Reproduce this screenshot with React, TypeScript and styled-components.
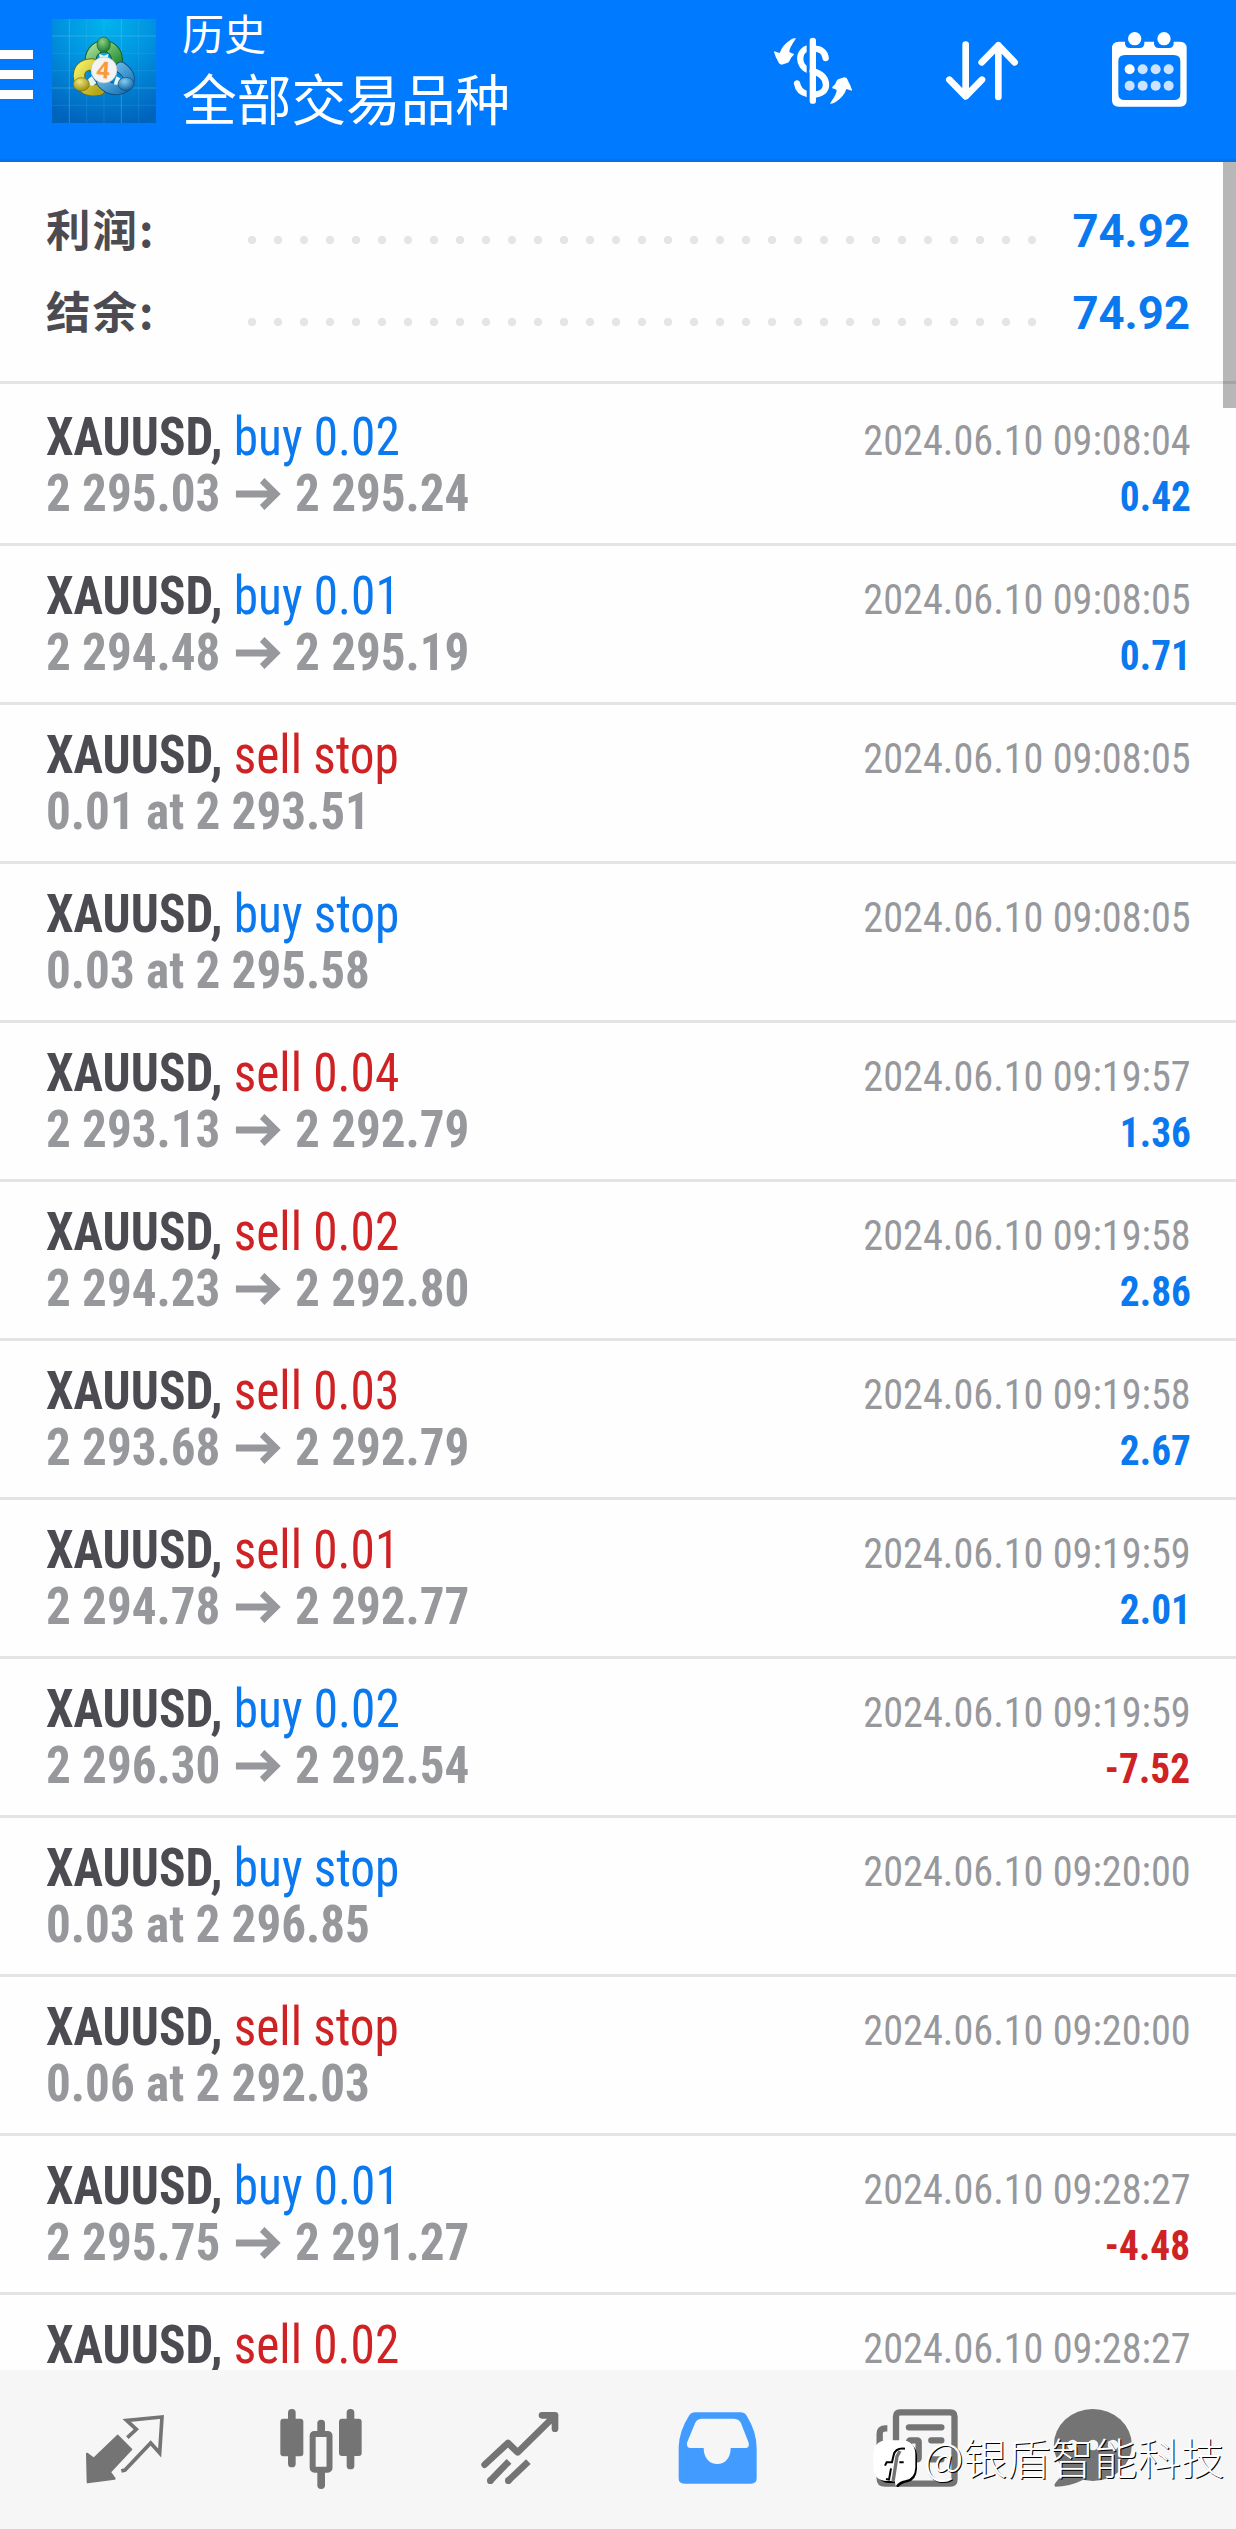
import React from 'react';
import styled, { createGlobalStyle } from 'styled-components';

const BLUE = '#0a78ee';
const RED = '#cf2224';
const NAV_GREY = '#747474';
const condensed = "'Roboto Condensed', Roboto, 'Noto Sans CJK SC', sans-serif";
const cjk = "'Noto Sans CJK SC', Roboto, sans-serif";

const GlobalStyle = createGlobalStyle`
  * { box-sizing: border-box; }
  body { margin: 0; background: #fefefe; }
`;

const Screen = styled.div`
  position: relative;
  width: 1236px;
  height: 2529px;
  display: flex;
  flex-direction: column;
  overflow: hidden;
  background: #fefefe;
  font-family: ${condensed};
`;

const Header = styled.header`
  flex: none;
  height: 162px;
  display: flex;
  align-items: flex-start;
  background: #007aff;
  border-bottom: 3px solid #0871e6;
  padding-right: 36px;
`;

const MenuButton = styled.div`
  width: 33px;
  margin: 50px 19px 0 0;
  display: flex;
  flex-direction: column;
  gap: 11px;
`;

const MenuBar = styled.span`
  height: 9px;
  background: #fff;
`;

const Brand = styled.svg`
  width: 104px;
  height: 104px;
  margin-top: 19px;
  flex: none;
`;

const Titles = styled.div`
  flex: 1;
  margin-left: 26px;
  padding-top: 3px;
  display: flex;
  flex-direction: column;
  font-family: ${cjk};
  color: #fff;
  white-space: nowrap;
`;

const Section = styled.span`
  font-size: 42px;
  line-height: 58px;
`;

const Scope = styled.span`
  font-size: 54.7px;
  line-height: 72px;
`;

const Actions = styled.div`
  display: flex;
  gap: 70px;
  margin-top: 20px;
`;

const ActionIcon = styled.svg<{ $width: number }>`
  width: ${(p) => p.$width}px;
  height: 100px;
`;

const Content = styled.main`
  flex: 1;
  min-height: 0;
  overflow: hidden;
  position: relative;
`;

const ScrollThumb = styled.div`
  position: absolute;
  top: 0;
  right: 0;
  width: 13px;
  height: 246px;
  background: rgba(0, 0, 0, 0.28);
`;

const Summary = styled.section`
  height: 222px;
  padding: 25px 46px 0 46px;
  border-bottom: 3px solid #e4e4e4;
`;

const SummaryRow = styled.div`
  height: 82px;
  display: flex;
  align-items: baseline;
  line-height: 82px;
`;

const SummaryLabel = styled.span`
  width: 193px;
  font-family: ${cjk};
  font-weight: 700;
  font-size: 44.5px;
  letter-spacing: 2px;
  color: #4c4b51;
`;

const Leader = styled.span`
  align-self: flex-start;
  width: 806px;
  height: 26px;
  margin-top: 40px;
  background: radial-gradient(circle, #e5e5e5 3.8px, rgba(229, 229, 229, 0) 4.5px) 0 0 / 26px 26px repeat-x;
`;

const SummaryValue = styled.span`
  flex: 1;
  text-align: right;
  font-family: Roboto, sans-serif;
  font-weight: 700;
  font-size: 45.5px;
  color: ${BLUE};
`;

const Deal = styled.article<{ $first: boolean }>`
  height: ${(p) => (p.$first ? 162 : 159)}px;
  padding: ${(p) => (p.$first ? 25 : 22)}px 45.5px 0 46px;
  display: flex;
  justify-content: space-between;
  border-bottom: 3px solid #e4e4e4;
  white-space: nowrap;
  line-height: 56px;
`;

const DealMain = styled.div`
  display: flex;
  flex-direction: column;
`;

const DealTitle = styled.div`
  font-size: 53px;
  transform: scaleX(0.93);
  transform-origin: left;
`;

const Instrument = styled.b`
  font-weight: 700;
  color: #4c4b51;
`;

const Order = styled.span<{ $buy: boolean }>`
  font-weight: 450;
  color: ${(p) => (p.$buy ? BLUE : RED)};
`;

const Prices = styled.div`
  display: flex;
  align-items: center;
  font-size: 52px;
  font-weight: 700;
  color: #97989c;
  transform: translateY(1px) scaleX(0.944);
  transform-origin: left;
`;

const Arrow = styled.svg`
  width: 48px;
  height: 32px;
  margin: 0 15px 0 16px;
`;

const DealSide = styled.div`
  padding-top: 4px;
  display: flex;
  flex-direction: column;
  align-items: flex-end;
  font-size: 42px;
`;

const Time = styled.time`
  color: #97989c;
  font-weight: 430;
  transform: scaleX(0.958);
  transform-origin: right;
`;

const Result = styled.b<{ $loss: boolean }>`
  color: ${(p) => (p.$loss ? RED : BLUE)};
  transform: scaleX(0.936);
  transform-origin: right;
`;

const Nav = styled.nav`
  flex: none;
  height: 159px;
  padding: 30px 0 0 26px;
  display: flex;
  background: #f6f6f7;
`;

const NavItem = styled.div<{ $last?: boolean }>`
  width: ${(p) => (p.$last ? 157 : 197.5)}px;
  display: flex;
  justify-content: center;
`;

const NavIcon = styled.svg`
  width: 100px;
  height: 100px;
`;

const Watermark = styled.div`
  position: absolute;
  left: 872px;
  top: 2423px;
  display: flex;
  align-items: center;
  height: 66px;
  white-space: nowrap;
  font-family: ${cjk};
  font-weight: 300;
  font-size: 43.5px;
  color: #fff;
  text-shadow: 1px 1px 0.5px #000;
`;

const WatermarkBadge = styled.svg`
  width: 50px;
  height: 56px;
  margin: 6px 2px 0 0;
`;

type DealData = { order: string; from: string; to?: string; time: string; result?: string };

const deals: DealData[] = [
  { order: 'buy 0.02', from: '2 295.03', to: '2 295.24', time: '09:08:04', result: '0.42' },
  { order: 'buy 0.01', from: '2 294.48', to: '2 295.19', time: '09:08:05', result: '0.71' },
  { order: 'sell stop', from: '0.01 at 2 293.51', time: '09:08:05' },
  { order: 'buy stop', from: '0.03 at 2 295.58', time: '09:08:05' },
  { order: 'sell 0.04', from: '2 293.13', to: '2 292.79', time: '09:19:57', result: '1.36' },
  { order: 'sell 0.02', from: '2 294.23', to: '2 292.80', time: '09:19:58', result: '2.86' },
  { order: 'sell 0.03', from: '2 293.68', to: '2 292.79', time: '09:19:58', result: '2.67' },
  { order: 'sell 0.01', from: '2 294.78', to: '2 292.77', time: '09:19:59', result: '2.01' },
  { order: 'buy 0.02', from: '2 296.30', to: '2 292.54', time: '09:19:59', result: '-7.52' },
  { order: 'buy stop', from: '0.03 at 2 296.85', time: '09:20:00' },
  { order: 'sell stop', from: '0.06 at 2 292.03', time: '09:20:00' },
  { order: 'buy 0.01', from: '2 295.75', to: '2 291.27', time: '09:28:27', result: '-4.48' },
  { order: 'sell 0.02', from: '', time: '09:28:27' },
];

function Logo() {
  return (
    <Brand viewBox="37 28 312 312">
      <defs>
        <radialGradient id="sky" cx="0.52" cy="0.02" r="1">
          <stop offset="0" stopColor="#02b4ec" />
          <stop offset="0.45" stopColor="#0093e0" />
          <stop offset="1" stopColor="#0064bd" />
        </radialGradient>
        <linearGradient id="green" x1="0" y1="0" x2="1" y2="1">
          <stop offset="0" stopColor="#a5dc98" />
          <stop offset="1" stopColor="#1e8a2e" />
        </linearGradient>
        <linearGradient id="yellow" x1="0" y1="0" x2="1" y2="1">
          <stop offset="0" stopColor="#f1ec62" />
          <stop offset="1" stopColor="#b3a516" />
        </linearGradient>
        <linearGradient id="blue" x1="0" y1="0" x2="1" y2="1">
          <stop offset="0" stopColor="#7cc8ee" />
          <stop offset="1" stopColor="#1674b8" />
        </linearGradient>
        <radialGradient id="greenBall" cx="0.4" cy="0.3" r="0.7">
          <stop offset="0" stopColor="#8fd08a" />
          <stop offset="1" stopColor="#1b7a2a" />
        </radialGradient>
        <radialGradient id="yellowBall" cx="0.4" cy="0.3" r="0.7">
          <stop offset="0" stopColor="#eee67a" />
          <stop offset="1" stopColor="#9d9014" />
        </radialGradient>
        <radialGradient id="blueBall" cx="0.4" cy="0.3" r="0.7">
          <stop offset="0" stopColor="#86cdf0" />
          <stop offset="1" stopColor="#1263a4" />
        </radialGradient>
      </defs>
      <rect x="37" y="28" width="312" height="312" fill="url(#sky)" />
      <path d="M89 28V340M141 28V340M193 28V340M245 28V340M297 28V340M37 79H349M37 131H349M37 183H349M37 235H349M37 287H349" stroke="#6cc4f4" strokeWidth="2" opacity="0.25" />
      <path d="M245 28V340M37 235H349M89 28V340M37 79H349" stroke="#8cd4fa" strokeWidth="2" opacity="0.3" />
      <g strokeLinecap="round" fill="none">
        <path d="M154 168C140 92 244 90 231 166" stroke="#14602a" strokeWidth="36" />
        <path d="M154 168C140 92 244 90 231 166" stroke="url(#green)" strokeWidth="30" />
        <path d="M158 164C114 164 106 205 135 234Q150 246 179 240" stroke="#6f6a18" strokeWidth="36" />
        <path d="M158 164C114 164 106 205 135 234Q150 246 179 240" stroke="url(#yellow)" strokeWidth="31" />
        <path d="M244 174C286 204 264 236 232 239Q205 239 188 218" stroke="#124a7c" strokeWidth="36" />
        <path d="M244 174C286 204 264 236 232 239Q205 239 188 218" stroke="url(#blue)" strokeWidth="31" />
      </g>
      <path d="M178 132l15 6 14-6-5 20h-20zM146 208l10-8 14 20-10 8-15-2zM242 206l-12-6-8 24 12 2z" fill="#e9f5ea" />
      <ellipse cx="192" cy="105" rx="20" ry="23" fill="url(#greenBall)" stroke="#175f25" strokeWidth="2" />
      <ellipse cx="125" cy="224" rx="24" ry="20" fill="url(#yellowBall)" stroke="#776e14" strokeWidth="2" />
      <ellipse cx="259" cy="223" rx="24" ry="20" fill="url(#blueBall)" stroke="#11507e" strokeWidth="2" />
      <circle cx="193" cy="181" r="39" fill="#f3f3f4" stroke="#b9bec4" strokeWidth="2" />
      <text x="191" y="206" textAnchor="middle" fontFamily="'Open Sans', sans-serif" fontWeight="700" fontSize="70" fill="#f89a38" transform="rotate(4 191 181)">
        4
      </text>
    </Brand>
  );
}

function CurrencyIcon() {
  const curl = 'M108 55C98 72 91 80 88 94Q89 99 101 101Q103 105 98 108Q92 113 88 124Q86 129 79 130L65 134Q58 134 54 124Q46 110 42 96Q42 92 47 95L59 99Q66 76 92 59Q100 54 108 55Z';
  return (
    <ActionIcon $width={110} viewBox="0 0 330 300">
      <defs>
        <clipPath id="leftHalf">
          <rect x="90" y="50" width="50" height="200" />
        </clipPath>
      </defs>
      <path d={curl} fill="#fff" />
      <path d={curl} fill="#fff" transform="rotate(180 159 153)" />
      <path d="M158.5 63V242" stroke="#fff" strokeWidth="19" strokeLinecap="round" />
      <g fill="none" stroke="#fff" strokeWidth="19" strokeLinecap="round">
        <path d="M160 86C183 85 195 98 197 114" />
        <path d="M158 153C184 161 198 174 198 194C198 214 182 223 160 224" />
        <g clipPath="url(#leftHalf)">
          <path d="M150 84C112 88 110 142 150 152" />
          <path d="M111 190C114 209 128 221 150 224" />
        </g>
      </g>
    </ActionIcon>
  );
}

function SortIcon() {
  return (
    <ActionIcon $width={90} viewBox="600 60 270 300" fill="none" stroke="#fff" strokeWidth="20" strokeLinecap="round" strokeLinejoin="round">
      <path d="M677 134V289M628 239L677 289L726 239" />
      <path d="M775 291V136M725 187L775 136L824 187" />
    </ActionIcon>
  );
}

function CalendarIcon() {
  return (
    <ActionIcon $width={100} viewBox="1080 60 300 300">
      <path fill="#fff" fillRule="evenodd" d="M1136 125H1155V130Q1155 144 1170 144H1199Q1213 144 1213 130V125H1242V130Q1242 144 1257 144H1287Q1301 144 1301 130V125H1320Q1340 125 1340 145V301Q1340 320 1320 320H1136Q1116 320 1116 301V145Q1116 125 1136 125ZM1155 165Q1135 165 1135 184V281Q1135 300 1155 300H1301Q1321 300 1321 281V184Q1321 165 1301 165Z" />
      <circle cx="1184" cy="116" r="20" fill="#fff" />
      <circle cx="1272" cy="116" r="20" fill="#fff" />
      {[208, 257].map((y) =>
        [1169, 1208, 1247, 1286].map((x) => (
          <circle key={`${x}-${y}`} cx={x} cy={y} r="15" fill={x === 1169 && y === 208 ? '#fff' : '#cbe3ff'} />
        ))
      )}
    </ActionIcon>
  );
}

function BottomNav() {
  return (
    <Nav>
      <NavItem>
        <NavIcon viewBox="224 390 300 300">
          <path d="M352 497L393 538L329 606L343 626L262 637L260 551L280 566Z" fill={NAV_GREY} stroke={NAV_GREY} strokeWidth="6" strokeLinejoin="round" />
          <path d="M381 503L408 478L379 451L485 441L478 549L451 519L374 600L363 603" fill="none" stroke={NAV_GREY} strokeWidth="11" />
        </NavIcon>
      </NavItem>
      <NavItem>
        <NavIcon viewBox="817 390 300 300" fill={NAV_GREY}>
          <rect x="865" y="417" width="23" height="175" rx="11" />
          <rect x="842" y="446" width="69" height="113" rx="9" />
          <rect x="1041" y="417" width="23" height="181" rx="11" />
          <rect x="1018" y="446" width="68" height="112" rx="9" />
          <rect x="953" y="449" width="23" height="60" rx="11" />
          <rect x="953" y="590" width="23" height="67" rx="11" />
          <rect x="939" y="492" width="50.5" height="107" rx="5" fill="#f6f6f7" stroke={NAV_GREY} strokeWidth="18" />
        </NavIcon>
      </NavItem>
      <NavItem>
        <NavIcon viewBox="209 390 300 300" fill="none" stroke={NAV_GREY} strokeWidth="20" strokeLinecap="round" strokeLinejoin="round">
          <path d="M253 584L323 519L352 547L464 437M425 436H464V476" />
          <path d="M270 632L326 574" strokeLinecap="butt" />
          <path d="M324 632L384 575" strokeLinecap="butt" />
          <path d="M270 632h0.1M324 632h0.1" />
        </NavIcon>
      </NavItem>
      <NavItem>
        <NavIcon viewBox="802 390 300 300">
          <path fill="#429bff" fillRule="evenodd" d="M887 427H1022Q1034 427 1041 437Q1071 485 1071 535V625Q1071 641 1054 641H854Q837 641 837 625V530Q839 482 868 437Q875 427 887 427ZM905 446Q891 447 886 460L862 518Q860 534 873 534H912C912 565 930 582 953 582S993 565 993 534H1037Q1050 534 1047 518L1024 460Q1019 447 1003 446Z" />
        </NavIcon>
      </NavItem>
      <NavItem>
        <NavIcon viewBox="146 390 300 300" fill="none" stroke={NAV_GREY} strokeWidth="19">
          <path d="M213 475H208Q190 475 190 491V625Q190 641 206 641H402Q414.5 641 414.5 628V440Q414.5 427 402 427H251Q239 427 239 440V630" />
          <path d="M278 472H375" strokeLinecap="round" />
          <rect x="278" y="511" width="29" height="57" rx="4" />
          <path d="M345 511H375M345 568H375" strokeLinecap="round" />
        </NavIcon>
      </NavItem>
      <NavItem $last>
        <NavIcon viewBox="678 390 300 300" fill={NAV_GREY}>
          <ellipse cx="830.5" cy="525" rx="117" ry="108" />
          <path d="M742 594Q740 615 718 639Q713 647 718 650Q760 650 802 629Z" />
          <g fill="#f6f6f7">
            <circle cx="770" cy="525" r="16" />
            <circle cx="831" cy="525" r="16" />
            <circle cx="891" cy="525" r="16" />
          </g>
        </NavIcon>
      </NavItem>
    </Nav>
  );
}

export default function App() {
  return (
    <Screen>
      <GlobalStyle />
      <Header>
        <MenuButton>
          <MenuBar />
          <MenuBar />
          <MenuBar />
        </MenuButton>
        <Logo />
        <Titles>
          <Section>历史</Section>
          <Scope>全部交易品种</Scope>
        </Titles>
        <Actions>
          <CurrencyIcon />
          <SortIcon />
          <CalendarIcon />
        </Actions>
      </Header>
      <Content>
        <Summary>
          {['利润:', '结余:'].map((label) => (
            <SummaryRow key={label}>
              <SummaryLabel>{label}</SummaryLabel>
              <Leader />
              <SummaryValue>74.92</SummaryValue>
            </SummaryRow>
          ))}
        </Summary>
        {deals.map((deal, i) => (
          <Deal key={i} $first={i === 0}>
            <DealMain>
              <DealTitle>
                <Instrument>XAUUSD,</Instrument> <Order $buy={deal.order.startsWith('buy')}>{deal.order}</Order>
              </DealTitle>
              {deal.from && (
                <Prices>
                  {deal.from}
                  {deal.to && (
                    <>
                      <Arrow viewBox="0 0 48 32" preserveAspectRatio="none" fill="none" stroke="#97989c" strokeWidth="7">
                        <path d="M0 16H42M28 2.5L42.5 16L28 29.5" />
                      </Arrow>
                      {deal.to}
                    </>
                  )}
                </Prices>
              )}
            </DealMain>
            <DealSide>
              <Time>2024.06.10 {deal.time}</Time>
              {deal.result && <Result $loss={deal.result.startsWith('-')}>{deal.result}</Result>}
            </DealSide>
          </Deal>
        ))}
        <ScrollThumb />
      </Content>
      <BottomNav />
      <Watermark>
        <WatermarkBadge viewBox="0 0 150 168">
          <path d="M50 34H95Q132 36 135 74V114Q133 148 106 154Q90 156 76 171L70 156H52Q14 153 12 116V74Z" fill="#000" />
          <path d="M45 28H90Q128 30 130 68V110Q128 143 100 148Q85 149 71 165L68 150H45Q6 148 4 110V68Q6 30 45 28Z" fill="#fff" />
          <path d="M84 60L75 76L63 152" fill="none" stroke={NAV_GREY} strokeWidth="10" />
          <path d="M99 53Q70 50 65 72L60 94H44L39 104M57 112L51 146L42 144M82 94H95" fill="none" stroke="#000" strokeWidth="6" />
        </WatermarkBadge>
        @银盾智能科技
      </Watermark>
    </Screen>
  );
}
